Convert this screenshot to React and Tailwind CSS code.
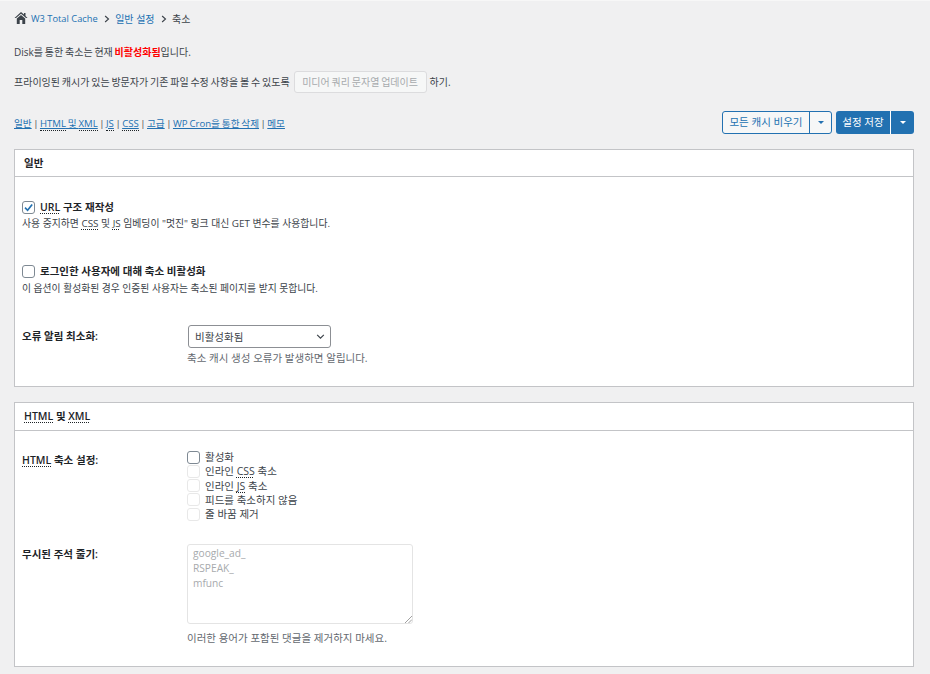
const FONT = "font-['Open_Sans','Noto_Sans_CJK_KR',sans-serif]";

function Abbr({ children }) {
  return <span className="underline decoration-dotted decoration-[#1d2327] underline-offset-2">{children}</span>;
}

function LinkAbbr({ children }) {
  return <span className="border-b border-dotted border-[#1d2327]">{children}</span>;
}

function Check({ checked, disabled }) {
  return (
    <span className={`flex h-[13px] w-[13px] shrink-0 items-center justify-center rounded-[3px] border bg-white ${disabled ? "border-[#e8e8e8]" : "border-[#7e8993]"}`}>
      {checked && (
        <svg viewBox="0 0 12 12" className="h-[11px] w-[11px]">
          <path d="M2.2 6.2 L5 9 L10 2.6" fill="none" stroke="#2271b1" strokeWidth="1.8" />
        </svg>
      )}
    </span>
  );
}

function Caret({ color }) {
  return <span className={`h-0 w-0 border-x-[3px] border-t-[3px] border-x-transparent ${color}`} />;
}

function Chevron() {
  return (
    <svg viewBox="0 0 8 10" className="ml-[6.5px] mr-[5px] h-[8px] w-[6px]">
      <path d="M1.5 1 L6 5 L1.5 9" fill="none" stroke="#3c434a" strokeWidth="1.5" />
    </svg>
  );
}

function Panel({ title, children, className, head }) {
  return (
    <section className={`border border-[#c3c4c7] bg-white ${className}`}>
      <h3 className={`flex items-center border-b border-[#c3c4c7] pl-[9px] text-[10.5px] font-semibold text-[#1d2327] ${head}`}>{title}</h3>
      {children}
    </section>
  );
}

const link = "text-[#2271b1] underline";
const Sep = () => <span className="mx-[1.5px]">|</span>;

export default function App() {
  return (
    <div className={`${FONT} h-[674px] w-[930px] overflow-hidden border-t border-[#f7f7f7] bg-[#f0f0f1] text-[10.5px] leading-[14px] text-[#3c434a]`}>
      <div className="pl-[14px] pr-[16px]">
        <nav className="flex h-[36px] items-center text-[10px]">
          <svg viewBox="0 0 14 14" className="mr-[3px] h-[14px] w-[14px] -translate-y-[1px]">
            <path d="M7 1 L0.5 7 L2 7 L7 2.8 L12 7 L13.5 7 L11.5 5 V2 H10 V3.6 Z" fill="#3c434a" />
            <path d="M2.8 7.6 L7 4 L11.2 7.6 V13 H8.3 V9 H5.7 V13 H2.8 Z" fill="#3c434a" />
          </svg>
          <span className="text-[9.3px] text-[#2271b1]">W3 Total Cache</span>
          <Chevron />
          <span className="text-[#2271b1]">일반 설정</span>
          <Chevron />
          <span>축소</span>
        </nav>

        <div className="text-[10px] [word-spacing:-0.8px]">
          <p className="mt-[8px]">Disk를 통한 축소는 현재 <span className="font-bold text-[#ff0000]">비활성화됨</span>입니다.</p>

          <div className="mt-[12px] flex items-center">
            <span>프라이잉된 캐시가 있는 방문자가 기존 파일 수정 사항을 볼 수 있도록</span>
            <span className="ml-[4px] mr-[3px] flex h-[22px] w-[133px] items-center justify-center rounded-[3px] border border-[#dcdcde] bg-[#f6f7f7] text-[#a7aaad]">미디어 쿼리 문자열 업데이트</span>
            <span>하기.</span>
          </div>
        </div>

        <div className="mt-[17px] flex h-[24px] items-center justify-between">
          <div className="pt-[3px] text-[9.6px] [word-spacing:-0.6px]">
            <a className={link}>일반</a><Sep /><a className={link}><LinkAbbr>HTML</LinkAbbr> 및 <LinkAbbr>XML</LinkAbbr></a><Sep /><a className={link}><LinkAbbr>JS</LinkAbbr></a><Sep /><a className={link}><LinkAbbr>CSS</LinkAbbr></a><Sep /><a className={link}>고급</a><Sep /><a className={link}>WP Cron을 통한 삭제</a><Sep /><a className={link}>메모</a>
          </div>
          <div className="flex items-center gap-[4px]">
            <div className="flex h-[23px] overflow-hidden rounded-[3px] border border-[#2271b1] bg-[#f6f7f7] text-[#2271b1]">
              <span className="flex w-[87px] items-center justify-center border-r border-[#2271b1]">모든 캐시 비우기</span>
              <span className="flex w-[21px] items-center justify-center"><Caret color="border-t-[#2271b1]" /></span>
            </div>
            <div className="flex h-[23px] gap-[1px] overflow-hidden rounded-[3px] bg-white text-white">
              <span className="flex w-[54px] items-center justify-center bg-[#2271b1]">설정 저장</span>
              <span className="flex w-[23px] items-center justify-center bg-[#2271b1]"><Caret color="border-t-white" /></span>
            </div>
          </div>
        </div>

        <Panel title="일반" head="h-[27px]" className="mt-[15px] h-[238px]">
          <div className="px-[7px] pt-[23px]">
            <div className="flex items-center gap-[5px] text-[#1d2327]">
              <Check checked />
              <span className="font-semibold"><Abbr>URL</Abbr> 구조 재작성</span>
            </div>
            <p className="mt-[3px] text-[9.85px] leading-[13px]">사용 중지하면 <Abbr>CSS</Abbr> 및 <Abbr>JS</Abbr> 임베딩이 "멋진" 링크 대신 GET 변수를 사용합니다.</p>

            <div className="mt-[34px] flex items-center gap-[5px] text-[#1d2327]">
              <Check />
              <span className="font-semibold">로그인한 사용자에 대해 축소 비활성화</span>
            </div>
            <p className="mt-[4px] text-[9.8px] leading-[13px]">이 옵션이 활성화된 경우 인증된 사용자는 축소된 페이지를 받지 못합니다.</p>

            <div className="mt-[30px] flex">
              <span className="w-[166px] pt-[4px] font-semibold text-[#1d2327]">오류 알림 최소화:</span>
              <div>
                <div className="flex h-[23px] w-[143px] items-center justify-between rounded-[3px] border border-[#8c8f94] bg-white pl-[6px] pr-[5px]">
                  <span>비활성화됨</span>
                  <svg viewBox="0 0 10 6" className="h-[5px] w-[9px]"><path d="M1 1 L5 5 L9 1" fill="none" stroke="#3c434a" strokeWidth="1.4" /></svg>
                </div>
                <p className="-ml-[1px] mt-[3px] text-[#646970]">축소 캐시 생성 오류가 발생하면 알립니다.</p>
              </div>
            </div>
          </div>
        </Panel>

        <Panel title={<span><Abbr>HTML</Abbr> 및 <Abbr>XML</Abbr></span>} head="h-[28px] pb-[2px]" className="mt-[15px] h-[265px]">
          <div className="flex px-[7px] pt-[19px]">
            <span className="w-[165px] pt-[3px] font-semibold text-[#1d2327]"><Abbr>HTML</Abbr> 축소 설정:</span>
            <div className="flex flex-col">
              {[
                ["활성화", false],
                [<span key="a">인라인 <Abbr>CSS</Abbr> 축소</span>, true],
                [<span key="b">인라인 <Abbr>JS</Abbr> 축소</span>, true],
                ["피드를 축소하지 않음", true],
                ["줄 바꿈 제거", true],
              ].map(([t, d], i) => (
                <div key={i} className="flex h-[14.25px] items-center gap-[5px]">
                  <Check disabled={d} />
                  <span>{t}</span>
                </div>
              ))}
            </div>
          </div>
          <div className="mt-[23px] flex px-[7px]">
            <span className="w-[165px] pt-[3px] font-semibold text-[#1d2327]">무시된 주석 줄기:</span>
            <div>
              <div className="relative h-[80px] w-[226px] rounded-[3px] border border-[#e4e4e4] bg-white px-[5px] py-[1px] text-[10.2px] leading-[15px] text-[#a7aaad]">
                <div>google_ad_</div>
                <div>RSPEAK_</div>
                <div>mfunc</div>
                <svg viewBox="0 0 8 8" className="absolute bottom-0 right-0 h-[8px] w-[8px]"><path d="M1 8 L8 1 M4.5 8 L8 4.5" stroke="#777" strokeWidth="0.7" /></svg>
              </div>
              <p className="mt-[7px] text-[#646970]">이러한 용어가 포함된 댓글을 제거하지 마세요.</p>
            </div>
          </div>
        </Panel>
      </div>
    </div>
  );
}
